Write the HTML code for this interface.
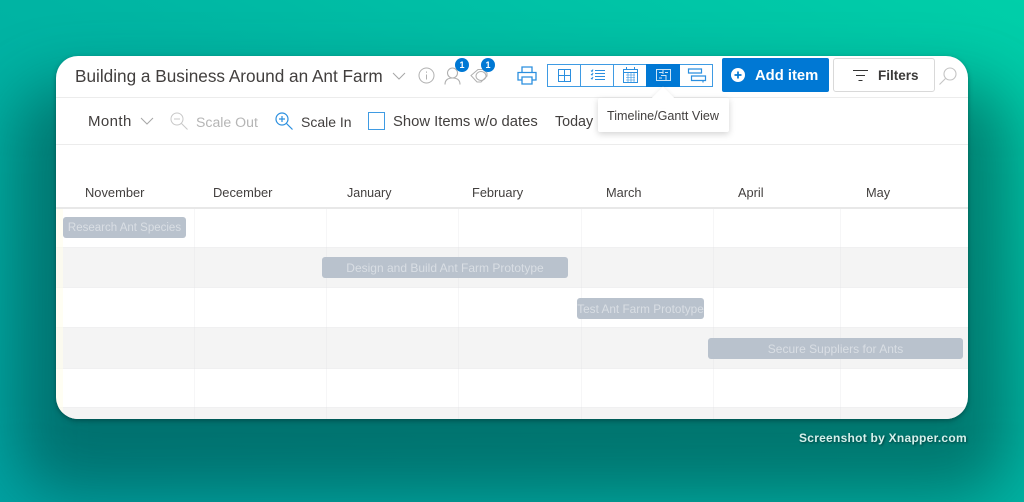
<!DOCTYPE html>
<html><head><meta charset="utf-8">
<style>
html,body{margin:0;padding:0}
body{width:1024px;height:502px;overflow:hidden;position:relative;font-family:"Liberation Sans",sans-serif;
background:linear-gradient(205deg,#00cfa9 0%,#00b5a3 45%,#00a3a3 100%)}
#w{position:absolute;left:0;top:0;width:1024px;height:502px;filter:blur(.3px)}
.abs,.t{position:absolute}
.t{white-space:nowrap;color:#423f3e;line-height:20px}
#glow{position:absolute;left:15px;top:85px;width:995px;height:410px;border-radius:50px;background:rgba(0,60,60,.5);filter:blur(32px)}
#card{position:absolute;left:56px;top:56px;width:912px;height:363px;border-radius:22px;background:#fff;overflow:hidden;box-shadow:0 2px 5px rgba(0,50,50,.5)}
.h{position:absolute;left:0;width:912px}
.v{position:absolute;width:1px;top:153px;height:210px;background:rgba(225,225,228,.3)}
.bar{position:absolute;height:21px;background:#b9c2cd;border-radius:3px;color:#d9dee4;font-size:12px;line-height:23px;text-align:center;white-space:nowrap;overflow:hidden}
svg{position:absolute;overflow:visible}
.badge{position:absolute;width:14px;height:14px;border-radius:50%;background:#0078d4;color:#fff;font-size:9px;font-weight:bold;text-align:center;line-height:14px}
</style></head><body>
<div id="w">
<div id="glow"></div>
<div id="card">
 <div class="h" style="top:41px;height:1px;background:#ececec"></div>
 <div class="h" style="top:88px;height:1px;background:#ececec"></div>
 <div class="h" style="top:151px;height:2px;background:#e8e8e8"></div>
 <div class="h" style="top:192px;height:39px;background:#f4f4f4;box-shadow:0 0 0 1px #f0f0f1"></div>
 <div class="h" style="top:272px;height:40px;background:#f4f4f4;box-shadow:0 0 0 1px #f0f0f1"></div>
 <div class="h" style="top:352px;height:11px;background:#f4f4f4;box-shadow:0 0 0 1px #f0f0f1"></div>
 <div class="abs" style="left:0;top:153px;width:7px;height:210px;background:rgba(255,253,235,.6)"></div>
 <div class="v" style="left:138px"></div><div class="v" style="left:270px"></div><div class="v" style="left:402px"></div><div class="v" style="left:525px"></div><div class="v" style="left:657px"></div><div class="v" style="left:784px"></div>
 <div class="bar" style="left:7px;top:161px;width:123px;font-size:11.5px">Research Ant Species</div>
 <div class="bar" style="left:266px;top:201px;width:246px">Design and Build Ant Farm Prototype</div>
 <div class="bar" style="left:521px;top:242px;width:127px;font-size:11.8px">Test Ant Farm Prototype</div>
 <div class="bar" style="left:652px;top:282px;width:255px">Secure Suppliers for Ants</div>
</div>

<span class="t" style="left:75px;top:66px;font-size:17.2px">Building a Business Around an Ant Farm</span>
<svg style="left:392px;top:72px" width="14" height="8" fill="none" stroke="#a6a6a6"><path d="M1 1l6 6 6-6"/></svg>
<svg style="left:418px;top:67px" width="17" height="17" fill="none" stroke="#b0b0b0"><circle cx="8.5" cy="8.5" r="7.5"/><path d="M8.5 7.5v5M8.5 4.5v1.2"/></svg>
<svg style="left:444px;top:67px" width="17" height="18" fill="none" stroke="#b0b0b0" stroke-width="1.1"><circle cx="8.5" cy="6" r="5"/><path d="M1 17.5c0-4.500 3-6.500 7.500-6.500s7.500 2 7.500 6.500"/></svg>
<svg style="left:470px;top:68px" width="18" height="15" fill="none" stroke="#b0b0b0" stroke-width="1"><path d="M1 7.500L8 1.500h5l4 3.500v3l-6 6H7z"/><ellipse cx="11" cy="8" rx="5" ry="4.500"/></svg>
<div class="badge" style="left:455px;top:58px">1</div>
<div class="badge" style="left:481px;top:58px">1</div>

<svg style="left:517px;top:66px" width="20" height="19" fill="none" stroke="#2b8fdf" stroke-width="1.3"><path d="M5 6V1h10v5M5 14H1V6.500h18V14h-4M5 11h10v7H5z"/></svg>

<div class="abs" style="left:547px;top:64px;width:166px;height:23px;border:1px solid #3f9be3;box-sizing:border-box;background:#fff"></div>
<div class="abs" style="left:580px;top:64px;width:1px;height:23px;background:#3f9be3"></div>
<div class="abs" style="left:613px;top:64px;width:1px;height:23px;background:#3f9be3"></div>
<div class="abs" style="left:646px;top:64px;width:34px;height:23px;background:#0078d4"></div>
<svg style="left:558px;top:69px" width="13" height="13" fill="none" stroke="#2b8fdf"><path d="M.5.500h12v12H.5zM6.500.500v12M.5 6.500h12"/></svg>
<svg style="left:590px;top:69px" width="15" height="13" fill="none" stroke="#2b8fdf"><path d="M5 1.500h10M5 4.500h10M5 7.500h10M5 10.500h10M1 1.500l1 1 1-2M1 5l1 1 1-2M1 9l1 1 1-2" /></svg>
<svg style="left:623px;top:67px" width="15" height="16" fill="none" stroke="#2b8fdf"><path d="M.5 2.500h14v13H.5zM.5 5.500h14"/><path d="M3.500 0v3M11.500 0v3" /><path d="M3 8h9M3 10.500h9M3 13h9M5 6v9M8 6v9M11 6v9" stroke-width=".6"/></svg>
<svg style="left:656px;top:69px" width="15" height="13" fill="none" stroke="#fff" opacity=".8"><path d="M.5.500h14v11H.5z"/><path d="M3 3.500h4M5 6.500h5M9 3.500h3M3 9h3M7 1v4M10 6v5"/></svg>
<svg style="left:688px;top:68px" width="18" height="15" fill="none" stroke="#2b8fdf" stroke-width="1.2"><path d="M.5 1h13v4H.5zM3.500 8h14v4.500h-14zM15 12.500v2"/></svg>

<div class="abs" style="left:722px;top:58px;width:107px;height:34px;background:#0078d4;border-radius:2px"></div>
<svg style="left:731px;top:68px" width="14" height="14"><circle cx="7" cy="7" r="7" fill="#fff"/><path d="M7 3.500v7M3.500 7h7" stroke="#0078d4" stroke-width="1.700"/></svg>
<span class="t" style="left:755px;top:66px;font-size:14.8px;font-weight:bold;color:#fff">Add item</span>
<div class="abs" style="left:833px;top:58px;width:102px;height:34px;border:1px solid #d9d9d9;border-radius:3px;box-sizing:border-box;background:#fff"></div>
<svg style="left:853px;top:70px" width="15" height="11" stroke="#333" fill="none"><path d="M0 .500h15M3 5.500h9M5.500 10.500h4"/></svg>
<span class="t" style="left:878px;top:66px;font-size:13.5px;font-weight:bold;color:#3b3a39">Filters</span>
<svg style="left:939px;top:67px" width="18" height="18" fill="none" stroke="#c4c4c4" stroke-width="1.100"><circle cx="11" cy="7" r="6"/><path d="M6.500 11.500L.5 17.500"/></svg>

<span class="t" style="left:88px;top:112px;font-size:15px;letter-spacing:.4px">Month</span>
<svg style="left:140px;top:117px" width="14" height="8" fill="none" stroke="#a6a6a6"><path d="M1 1l6 6 6-6"/></svg>
<svg style="left:170px;top:112px" width="18" height="18" fill="none" stroke="#c8c8c8"><circle cx="7" cy="7" r="6"/><path d="M4 7h6M11.500 11.500l6 6"/></svg>
<span class="t" style="left:196px;top:112px;font-size:14.1px;color:#b5b5b5">Scale Out</span>
<svg style="left:275px;top:112px" width="18" height="18" fill="none" stroke="#2b8fdf" stroke-width="1.200"><circle cx="7" cy="7" r="6"/><path d="M4 7h6M7 4v6M11.500 11.500l6 6"/></svg>
<span class="t" style="left:301px;top:112px;font-size:14px">Scale In</span>
<div class="abs" style="left:368px;top:112px;width:17px;height:18px;border:1.500px solid #3f9be3;box-sizing:border-box"></div>
<span class="t" style="left:393px;top:112px;font-size:14.8px">Show Items w/o dates</span>
<span class="t" style="left:555px;top:112px;font-size:14.3px">Today</span>

<div class="abs" style="left:598px;top:98px;width:131px;height:34px;background:#fff;border-radius:2px;box-shadow:0 2px 7px rgba(0,0,0,.18)"></div>
<div class="abs" style="left:655px;top:90px;width:16px;height:16px;background:#fff;transform:rotate(45deg);box-shadow:-1px -1px 3px rgba(0,0,0,.05)"></div>
<div class="abs" style="left:645px;top:98px;width:36px;height:10px;background:#fff"></div>
<span class="t" style="left:607px;top:106px;font-size:12.6px">Timeline/Gantt View</span>

<span class="t" style="left:85px;top:183px;font-size:12.9px">November</span>
<span class="t" style="left:213px;top:183px;font-size:12.9px">December</span>
<span class="t" style="left:347px;top:183px;font-size:12.5px">January</span>
<span class="t" style="left:472px;top:183px;font-size:12.8px">February</span>
<span class="t" style="left:606px;top:183px;font-size:12.8px">March</span>
<span class="t" style="left:738px;top:183px;font-size:12.8px">April</span>
<span class="t" style="left:866px;top:183px;font-size:12.8px">May</span>

<span class="t" style="left:799px;top:428px;font-size:12px;font-weight:bold;color:#d5f1ec;letter-spacing:.26px;text-shadow:1px 1px 2px rgba(0,50,50,.8)">Screenshot by Xnapper.com</span>
</div>
</body></html>
